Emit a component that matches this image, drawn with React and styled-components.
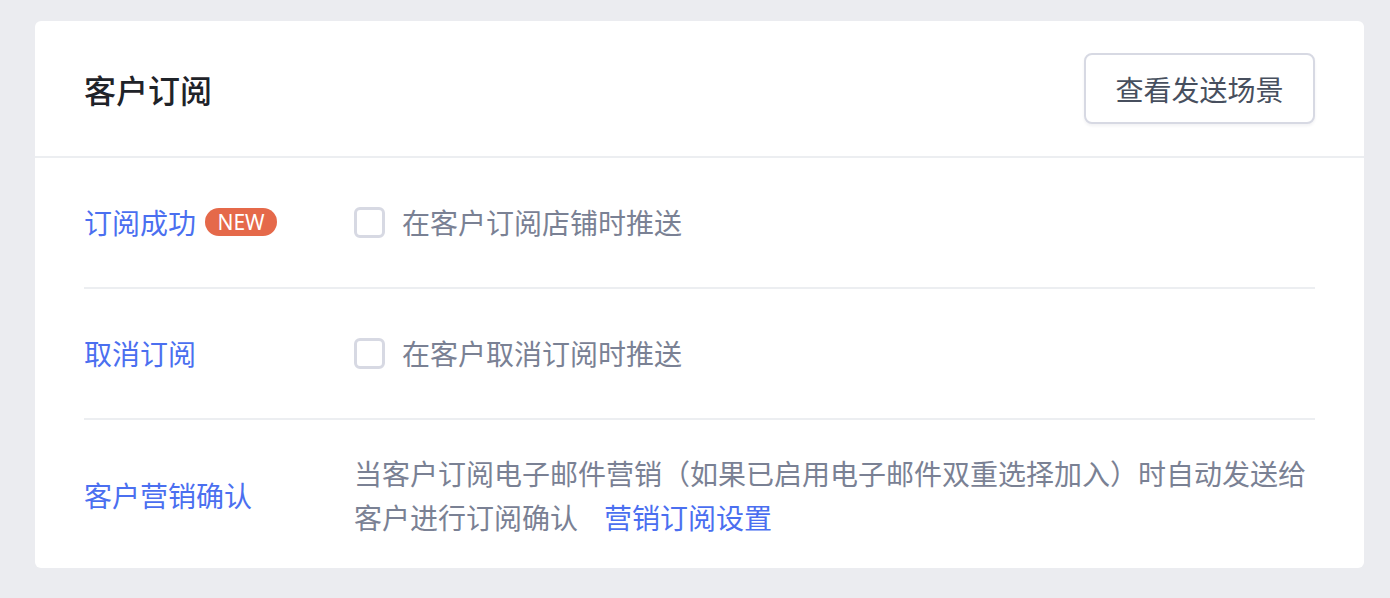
import styled, { createGlobalStyle } from "styled-components";

const GlobalStyle = createGlobalStyle`
  html, body {
    margin: 0;
    background: #ebecf0;
  }
  body {
    font-family: "Noto Sans CJK SC", "Noto Sans", sans-serif;
  }
`;

const Page = styled.div`
  padding: 21px 26px 29px 35px;
`;

const Card = styled.div`
  background: #fff;
  border-radius: 6px;
`;

const Header = styled.div`
  display: flex;
  align-items: center;
  justify-content: space-between;
  padding: 32px 49px 32px;
  border-bottom: 2px solid #eceef1;
`;

const Title = styled.h2`
  margin: 0;
  font-size: 32px;
  font-weight: 500;
  color: #1f2329;
`;

const SceneButton = styled.button`
  height: 71px;
  width: 231px;
  border: 2px solid #d7d9e3;
  border-radius: 8px;
  background: #fff;
  font-family: inherit;
  font-size: 28px;
  color: #474f5e;
  box-shadow: 0 2px 3px rgba(30, 40, 70, 0.06);
`;

const Body = styled.div`
  padding: 0 49px;
`;

const Row = styled.div`
  display: grid;
  grid-template-columns: 270px 1fr;
  align-items: center;
  padding: ${(p) => (p.$tall ? "31px 0 29px" : "42px 0 43px")};
  border-bottom: ${(p) => (p.$last ? "none" : "2px solid #eceef1")};
`;

const Label = styled.div`
  display: flex;
  align-items: center;
  gap: 9px;
  font-size: 28px;
  line-height: 44px;
  color: #4b6ff0;
`;

const Badge = styled.span`
  display: inline-flex;
  align-items: center;
  justify-content: center;
  height: 28px;
  width: 72px;
  border-radius: 14px;
  background: #e5694a;
  color: #fff;
  font-family: "Noto Sans", sans-serif;
  font-size: 21px;
  line-height: 1;
`;

const CheckLine = styled.label`
  display: flex;
  align-items: center;
  gap: 17px;
  font-size: 28px;
  line-height: 44px;
  color: #7a8194;
`;

const Box = styled.span`
  width: 25px;
  height: 25px;
  border: 3px solid #d7d9e3;
  border-radius: 6px;
  box-sizing: content-box;
`;

const Desc = styled.p`
  margin: 0;
  font-size: 28px;
  line-height: 44px;
  color: #7a8194;
`;

const Link = styled.a`
  display: inline-block;
  color: #4b6ff0;
  margin-left: 26px;
  text-decoration: none;
`;

export default function App() {
  return (
    <Page>
      <GlobalStyle />
      <Card>
        <Header>
          <Title>客户订阅</Title>
          <SceneButton>查看发送场景</SceneButton>
        </Header>
        <Body>
          <Row>
            <Label>
              订阅成功
              <Badge>NEW</Badge>
            </Label>
            <CheckLine>
              <Box />
              在客户订阅店铺时推送
            </CheckLine>
          </Row>
          <Row>
            <Label>取消订阅</Label>
            <CheckLine>
              <Box />
              在客户取消订阅时推送
            </CheckLine>
          </Row>
          <Row $tall $last>
            <Label>客户营销确认</Label>
            <Desc>
              当客户订阅电子邮件营销（如果已启用电子邮件双重选择加入）时自动发送给客户进行订阅确认
              <Link href="#">营销订阅设置</Link>
            </Desc>
          </Row>
        </Body>
      </Card>
    </Page>
  );
}
